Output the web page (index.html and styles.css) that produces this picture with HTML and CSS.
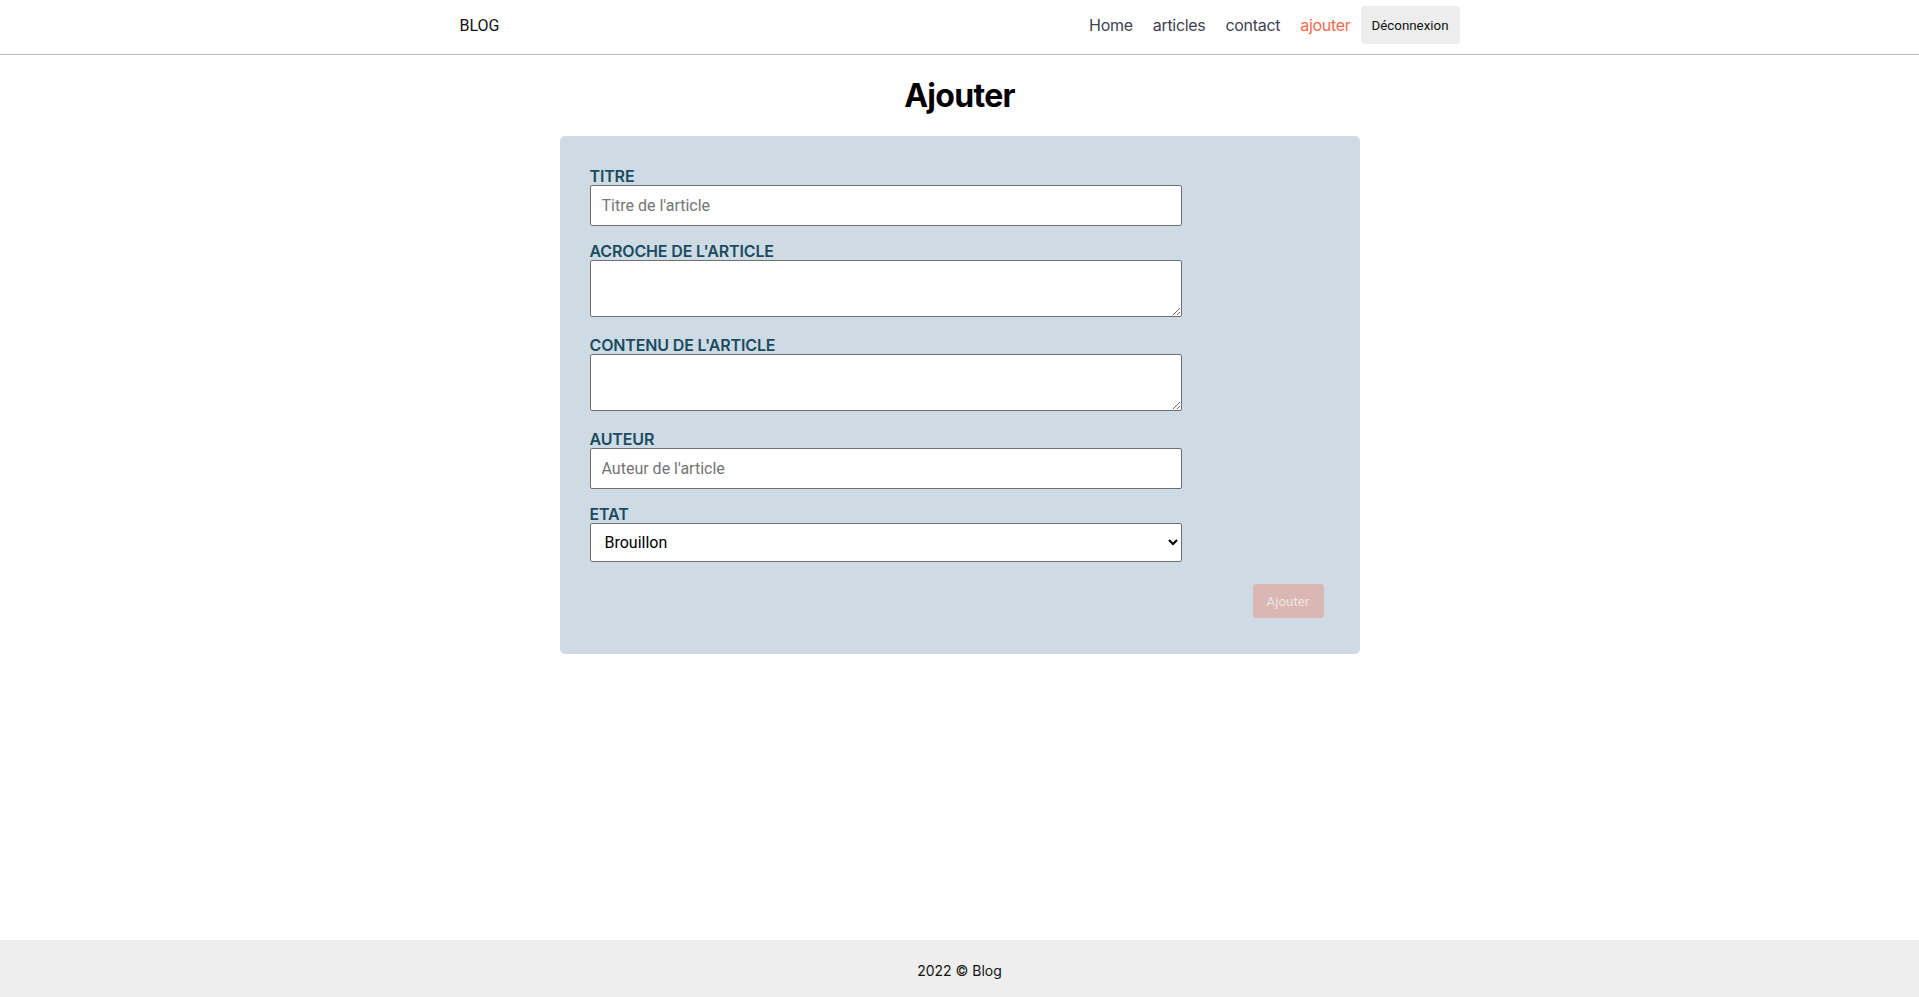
FILE: index.html
```html
<!DOCTYPE html>
<html lang="fr">
<head>
<meta charset="utf-8">
<title>Blog - Ajouter</title>
<link rel="stylesheet" href="styles.css">
</head>
<body>
<header class="site-header">
  <div class="header-inner">
    <a class="brand" href="#">BLOG</a>
    <nav class="nav">
      <a class="nav-link" href="#">Home</a>
      <a class="nav-link" href="#">articles</a>
      <a class="nav-link" href="#">contact</a>
      <a class="nav-link active" href="#">ajouter</a>
      <button class="logout" type="button">Déconnexion</button>
    </nav>
  </div>
</header>
<main class="main">
  <h1 class="page-title">Ajouter</h1>
  <form class="card">
    <div class="field">
      <label class="label" for="titre">TITRE</label>
      <input class="control" id="titre" type="text" placeholder="Titre de l'article">
    </div>
    <div class="field field-ta">
      <label class="label" for="acroche">ACROCHE DE L'ARTICLE</label>
      <textarea class="control textarea" id="acroche"></textarea>
    </div>
    <div class="field field-ta">
      <label class="label" for="contenu">CONTENU DE L'ARTICLE</label>
      <textarea class="control textarea" id="contenu"></textarea>
    </div>
    <div class="field">
      <label class="label" for="auteur">AUTEUR</label>
      <input class="control" id="auteur" type="text" placeholder="Auteur de l'article">
    </div>
    <div class="field field-last">
      <label class="label" for="etat">ETAT</label>
      <select class="control select" id="etat">
        <option>Brouillon</option>
        <option>Publié</option>
      </select>
    </div>
    <div class="actions">
      <button class="submit" type="submit" disabled>Ajouter</button>
    </div>
  </form>
</main>
<footer class="site-footer">2022 © Blog</footer>
</body>
</html>
```

FILE: styles.css
```css
* { box-sizing: border-box; }

html, body { height: 100%; }

body {
  margin: 0;
  font-family: Inter, "Noto Sans", sans-serif;
  color: #000;
  background: #fff;
  display: flex;
  flex-direction: column;
  min-height: 100vh;
}

.site-header {
  height: 55px;
  padding-bottom: 4px;
  border-bottom: 1px solid #bdbdbd;
}

.header-inner {
  width: 1000px;
  margin: 0 auto;
  height: 50px;
  display: flex;
  align-items: center;
  justify-content: space-between;
}

.brand {
  font-family: Roboto, "Liberation Sans", sans-serif;
  font-size: 16px;
  color: #111;
  text-decoration: none;
}

.nav {
  display: flex;
  align-items: center;
}

.nav-link {
  font-size: 16px;
  letter-spacing: -0.3px;
  color: #3e4354;
  text-decoration: none;
  padding: 0 10px;
}

.nav-link.active { color: #f3694a; }

.logout {
  font-family: Roboto, "Liberation Sans", sans-serif;
  font-size: 13.33px;
  color: #111;
  background: #ededed;
  border: none;
  border-radius: 4px;
  height: 38px;
  padding: 0 11px;
}

.main {
  flex: 1;
  display: flex;
  flex-direction: column;
  align-items: center;
}

.page-title {
  font-size: 32px;
  font-weight: 700;
  letter-spacing: -0.7px;
  margin: 21px 0 21px;
  line-height: 39px;
}

.card {
  width: 800px;
  background: #cedbe5;
  border-radius: 5px;
  padding: 31px 30px 36px;
  display: flex;
  flex-direction: column;
}

.field {
  display: flex;
  flex-direction: column;
  margin-bottom: 16px;
}

.field-ta { margin-bottom: 19px; }

.field-last { margin-bottom: 22px; }

.label {
  font-size: 16px;
  font-weight: 600;
  letter-spacing: -0.15px;
  line-height: 18px;
  color: #1b4b5f;
}

.control {
  width: 592px;
  font-family: Roboto, "Liberation Sans", sans-serif;
  font-size: 16px;
  color: #000;
  background: #fff;
  border: 1px solid #6f6f6f;
  border-radius: 2px;
}

input.control {
  height: 41px;
  padding: 0 11px;
}

input.control::placeholder { color: #757575; }

.textarea {
  height: 57px;
  resize: vertical;
  padding: 8px 11px;
}

.select {
  height: 39px;
  padding: 0 10px;
}

.actions {
  display: flex;
  justify-content: flex-end;
  padding-right: 6px;
}

.submit {
  font-family: Roboto, "Liberation Sans", sans-serif;
  font-size: 13.33px;
  color: #ede3e3;
  background: #dbb7b4;
  border: none;
  border-radius: 3px;
  width: 71px;
  height: 34px;
  padding: 0;
}

.site-footer {
  height: 57px;
  padding-top: 3px;
  background: #eeeeee;
  display: flex;
  align-items: center;
  justify-content: center;
  font-size: 14px;
  color: #111;
}
```
